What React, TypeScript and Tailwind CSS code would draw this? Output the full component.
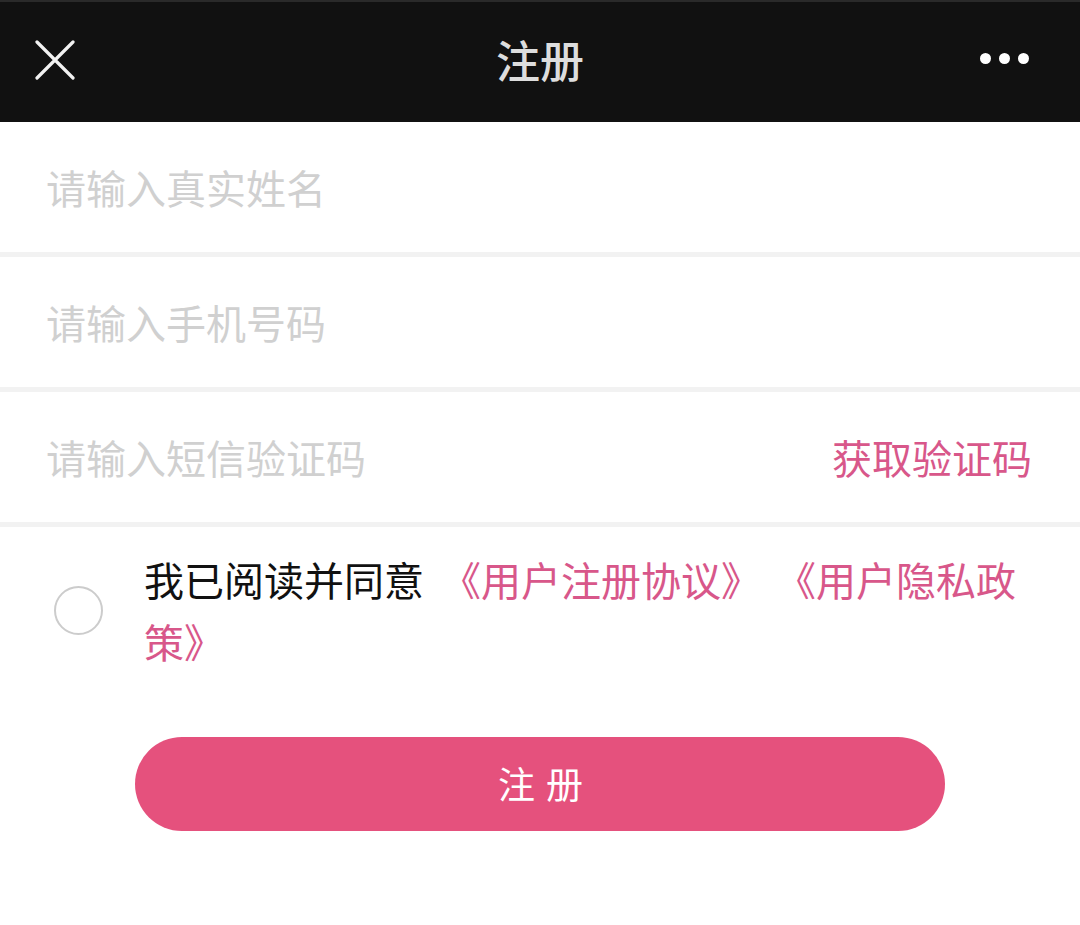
import React from "react";

const font = "font-['Noto_Sans_CJK_SC','Noto_Sans',sans-serif]";

function Field({ placeholder, right }: { placeholder: string; right?: string }) {
  return (
    <div className="flex h-[130px] items-center justify-between bg-white pl-[46px] pr-[48px]">
      <span className="text-[40px] leading-none text-[#d0d0d0]">{placeholder}</span>
      {right && <span className="text-[40px] leading-none text-[#d8578a]">{right}</span>}
    </div>
  );
}

export default function App() {
  return (
    <div className={`w-[1080px] h-[925px] bg-white ${font}`}>
      <div className="relative flex h-[122px] items-center justify-center bg-[#111111] border-t-2 border-[#2a2a2a]">
        <svg className="absolute left-[35px] top-[38px]" width="40" height="40" viewBox="0 0 40 40">
          <path d="M2 2 L38 38 M38 2 L2 38" stroke="#f2f2f2" strokeWidth="3.2" strokeLinecap="round" />
        </svg>
        <span className="text-[44px] font-medium leading-none text-[#dddddd] -mt-[7px]">注册</span>
        <div className="absolute right-[51px] top-[51px] flex gap-[8px]">
          <span className="h-[11px] w-[11px] rounded-full bg-white" />
          <span className="h-[11px] w-[11px] rounded-full bg-white" />
          <span className="h-[11px] w-[11px] rounded-full bg-white" />
        </div>
      </div>

      <Field placeholder="请输入真实姓名" />
      <div className="h-[5px] bg-[#f2f2f2]" />
      <Field placeholder="请输入手机号码" />
      <div className="h-[5px] bg-[#f2f2f2]" />
      <Field placeholder="请输入短信验证码" right="获取验证码" />
      <div className="h-[5px] bg-[#f2f2f2]" />

      <div className="flex items-center pt-[21px] pl-[54px] pr-[48px]">
        <span className="h-[49px] w-[49px] shrink-0 rounded-full border-2 border-[#cccccc]" />
        <p className="ml-[41px] text-[40px] leading-[62px] text-[#111111]">
          我已阅读并同意 <span className="ml-[8px] text-[#d8578a]">《用户注册协议》</span>{" "}
          <span className="ml-[6px] text-[#d8578a]">《用户隐私政策》</span>
        </p>
      </div>

      <div className="flex justify-center pt-[65px]">
        <button className="flex h-[94px] w-[810px] items-center justify-center rounded-full bg-[#e5517d] pl-[12px] text-[37px] tracking-[11px] text-white">
          注册
        </button>
      </div>
    </div>
  );
}
